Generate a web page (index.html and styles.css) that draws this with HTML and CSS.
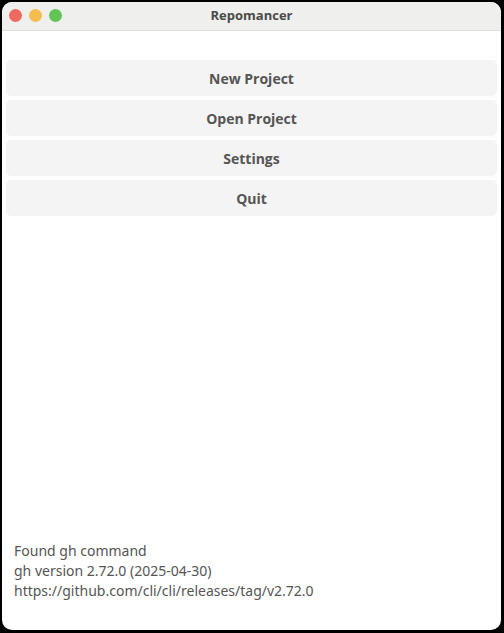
FILE: index.html
```html
<!DOCTYPE html>
<html>
<head>
<meta charset="utf-8">
<link rel="stylesheet" href="styles.css">
</head>
<body>
<div class="window">
  <div class="titlebar">
    <div class="lights">
      <span class="light red"></span>
      <span class="light yellow"></span>
      <span class="light green"></span>
    </div>
    <div class="title">Repomancer</div>
  </div>
  <div class="content">
    <div class="buttons">
      <button class="btn">New Project</button>
      <button class="btn">Open Project</button>
      <button class="btn">Settings</button>
      <button class="btn">Quit</button>
    </div>
    <div class="status">
      <div>Found gh command</div>
      <div>gh version 2.72.0 (2025-04-30)</div>
      <div>https://github.com/cli/cli/releases/tag/v2.72.0</div>
    </div>
  </div>
</div>
</body>
</html>
```

FILE: styles.css
```css
html, body {
  margin: 0;
  padding: 0;
  height: 633px;
  background: #000;
  overflow: hidden;
}
body {
  padding: 2px 3px 3px 2px;
  box-sizing: border-box;
  font-family: "Noto Sans", "Open Sans", sans-serif;
}
.window {
  height: 628px;
  background: #fff;
  border-radius: 10px;
  overflow: hidden;
  display: flex;
  flex-direction: column;
}
.titlebar {
  height: 28px;
  flex: none;
  background: #efefed;
  border-bottom: 1px solid #dcdcda;
  position: relative;
  display: flex;
  align-items: center;
  justify-content: center;
}
.lights {
  position: absolute;
  left: 7px;
  top: 7px;
  display: flex;
  gap: 7px;
}
.light {
  width: 13px;
  height: 13px;
  border-radius: 50%;
  display: block;
}
.red { background: #ee6a5f; }
.yellow { background: #f5bd4f; }
.green { background: #61c454; }
.title {
  font-family: "Open Sans", "Noto Sans", sans-serif;
  font-size: 13px;
  font-weight: 700;
  color: #4a4a4a;
  margin-top: -2px;
}
.content {
  flex: 1;
  display: flex;
  flex-direction: column;
  padding: 29px 4px 29px 4px;
}
.buttons {
  display: flex;
  flex-direction: column;
  gap: 4px;
}
.btn {
  height: 36px;
  border: none;
  border-radius: 5px;
  background: #f4f4f4;
  font-family: "Open Sans", "Noto Sans", sans-serif;
  font-size: 14px;
  font-weight: 700;
  color: #555;
  padding: 0;
}
.status {
  margin-top: auto;
  padding-left: 8px;
  font-size: 14px;
  line-height: 20px;
  color: #555;
}
```
